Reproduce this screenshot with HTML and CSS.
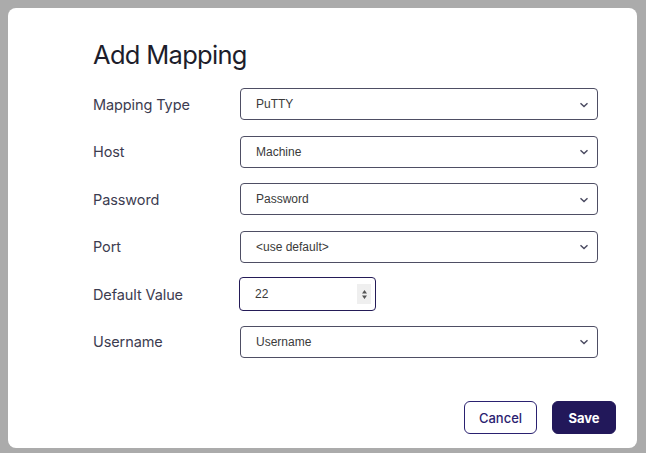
FILE: index.html
```html
<!DOCTYPE html>
<html>
<head>
<meta charset="utf-8">
<link rel="stylesheet" href="styles.css">
</head>
<body>
<div class="modal">
  <h1 class="title">Add Mapping</h1>
  <div class="form">
    <div class="label">Mapping Type</div>
    <div class="select"><span>PuTTY</span><svg class="chev" width="10" height="6" viewBox="0 0 10 6"><path d="M1.5 1.2 L5 4.6 L8.5 1.2" fill="none" stroke="#4a4a60" stroke-width="1.4"/></svg></div>
    <div class="label">Host</div>
    <div class="select"><span>Machine</span><svg class="chev" width="10" height="6" viewBox="0 0 10 6"><path d="M1.5 1.2 L5 4.6 L8.5 1.2" fill="none" stroke="#4a4a60" stroke-width="1.4"/></svg></div>
    <div class="label">Password</div>
    <div class="select"><span>Password</span><svg class="chev" width="10" height="6" viewBox="0 0 10 6"><path d="M1.5 1.2 L5 4.6 L8.5 1.2" fill="none" stroke="#4a4a60" stroke-width="1.4"/></svg></div>
    <div class="label">Port</div>
    <div class="select"><span>&lt;use default&gt;</span><svg class="chev" width="10" height="6" viewBox="0 0 10 6"><path d="M1.5 1.2 L5 4.6 L8.5 1.2" fill="none" stroke="#4a4a60" stroke-width="1.4"/></svg></div>
    <div class="label">Default Value</div>
    <div class="number"><span>22</span><div class="spin"><svg width="7" height="11" viewBox="0 0 7 11"><path d="M3.5 1 L6 4.5 L1 4.5 Z M1 6.5 L6 6.5 L3.5 10 Z" fill="#555"/></svg></div></div>
    <div class="label">Username</div>
    <div class="select"><span>Username</span><svg class="chev" width="10" height="6" viewBox="0 0 10 6"><path d="M1.5 1.2 L5 4.6 L8.5 1.2" fill="none" stroke="#4a4a60" stroke-width="1.4"/></svg></div>
  </div>
  <div class="actions">
    <button class="btn cancel">Cancel</button>
    <button class="btn save">Save</button>
  </div>
</div>
</body>
</html>
```
FILE: styles.css
```css
html, body { margin: 0; padding: 0; }
body {
  background: #ababab;
  width: 646px;
  height: 453px;
  overflow: hidden;
  font-family: Inter, "Noto Sans", sans-serif;
}
.modal {
  margin: 8px 0 0 8px;
  width: 629px;
  height: 440px;
  background: #fff;
  border-radius: 8px;
  box-sizing: border-box;
  padding: 29px 21px 0 85px;
  display: flex;
  flex-direction: column;
}
.title {
  margin: 0;
  font-weight: 400;
  font-size: 25.5px;
  line-height: 36px;
  color: #1d1d2b;
  letter-spacing: -0.7px;
}
.form {
  margin-top: 15px;
  display: grid;
  grid-template-columns: 147px 358px;
  grid-auto-rows: 32px;
  row-gap: 15.5px;
  align-items: center;
}
.label {
  font-size: 14.5px;
  color: #3c3c50;
  letter-spacing: -0.1px;
}
.select {
  height: 32px;
  box-sizing: border-box;
  border: 1px solid #4e4e64;
  border-radius: 4px;
  display: flex;
  align-items: center;
  justify-content: space-between;
  padding: 0 8px 0 15px;
  font-family: "Liberation Sans", Arial, sans-serif;
  font-size: 12px;
  color: #3a3a3a;
}
.chev { margin-top: 1px; }
.number {
  width: 137px;
  height: 34px;
  margin-left: -1px;
  box-sizing: border-box;
  border: 1.5px solid #241b57;
  border-radius: 4px;
  display: flex;
  align-items: center;
  justify-content: space-between;
  padding: 0 4px 0 15px;
  font-family: "Liberation Sans", Arial, sans-serif;
  font-size: 12px;
  color: #3a3a3a;
}
.spin {
  width: 14px;
  height: 20px;
  background: #efefef;
  display: flex;
  align-items: center;
  justify-content: center;
}
.actions {
  margin-top: auto;
  margin-bottom: 14px;
  display: flex;
  justify-content: flex-end;
  gap: 15px;
}
.btn {
  height: 33px;
  border-radius: 6px;
  font-family: Inter, "Noto Sans", sans-serif;
  font-size: 13px;
  padding: 0;
  cursor: pointer;
}
.cancel {
  width: 73px;
  background: #fff;
  border: 1px solid #2a2170;
  color: #2a2170;
  font-weight: 500;
}
.save {
  width: 64px;
  background: #22185a;
  border: 1px solid #22185a;
  color: #fff;
  font-weight: 700;
}
```
